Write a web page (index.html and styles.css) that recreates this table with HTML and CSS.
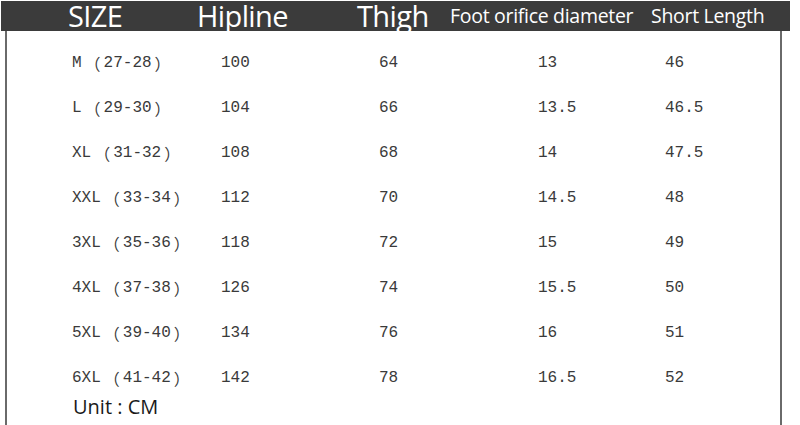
FILE: index.html
```html
<!DOCTYPE html>
<html>
<head>
<meta charset="utf-8">
<link rel="stylesheet" href="styles.css">
</head>
<body>
<div class="chart">
  <div class="head">
    <span class="h h-size">SIZE</span>
    <span class="h h-hip">Hipline</span>
    <span class="h h-thigh">Thigh</span>
    <span class="h h-small h-foot">Foot orifice diameter</span>
    <span class="h h-small h-short">Short Length</span>
  </div>
  <div class="body">
    <div class="row"><span class="c c1">M<span class="p">（</span>27-28<span class="p">）</span></span><span class="c c2">100</span><span class="c c3">64</span><span class="c c4">13</span><span class="c c5">46</span></div>
    <div class="row"><span class="c c1">L<span class="p">（</span>29-30<span class="p">）</span></span><span class="c c2">104</span><span class="c c3">66</span><span class="c c4">13.5</span><span class="c c5">46.5</span></div>
    <div class="row"><span class="c c1">XL<span class="p">（</span>31-32<span class="p">）</span></span><span class="c c2">108</span><span class="c c3">68</span><span class="c c4">14</span><span class="c c5">47.5</span></div>
    <div class="row"><span class="c c1">XXL<span class="p">（</span>33-34<span class="p">）</span></span><span class="c c2">112</span><span class="c c3">70</span><span class="c c4">14.5</span><span class="c c5">48</span></div>
    <div class="row"><span class="c c1">3XL<span class="p">（</span>35-36<span class="p">）</span></span><span class="c c2">118</span><span class="c c3">72</span><span class="c c4">15</span><span class="c c5">49</span></div>
    <div class="row"><span class="c c1">4XL<span class="p">（</span>37-38<span class="p">）</span></span><span class="c c2">126</span><span class="c c3">74</span><span class="c c4">15.5</span><span class="c c5">50</span></div>
    <div class="row"><span class="c c1">5XL<span class="p">（</span>39-40<span class="p">）</span></span><span class="c c2">134</span><span class="c c3">76</span><span class="c c4">16</span><span class="c c5">51</span></div>
    <div class="row"><span class="c c1">6XL<span class="p">（</span>41-42<span class="p">）</span></span><span class="c c2">142</span><span class="c c3">78</span><span class="c c4">16.5</span><span class="c c5">52</span></div>
    <div class="unit">Unit : CM</div>
  </div>
</div>
</body>
</html>
```
FILE: styles.css
```css
html, body {
  margin: 0;
  padding: 0;
  background: #ffffff;
}
.chart {
  width: 800px;
  height: 425px;
  padding-top: 1px;
  box-sizing: border-box;
}
.head {
  margin-left: 1px;
  width: 789px;
  height: 30px;
  background: #3b3b3b;
  display: flex;
  align-items: center;
  color: #ffffff;
  font-family: "Open Sans", "Noto Sans", sans-serif;
  white-space: nowrap;
  padding-left: 67px;
  box-sizing: border-box;
}
.h {
  font-size: 29px;
  line-height: 30px;
  letter-spacing: -0.6px;
}
.h-small {
  font-size: 19.5px;
  letter-spacing: -0.3px;
}
.h-size { width: 129px; }
.h-hip { width: 160px; }
.h-thigh { width: 93px; }
.h-foot { width: 201px; }
.h-short { width: 120px; }

.body {
  margin-left: 5px;
  width: 777px;
  height: 394px;
  border-left: 2px solid #6a6a6a;
  border-right: 2px solid #6a6a6a;
  box-sizing: border-box;
  padding-top: 22px;
}
.row {
  display: flex;
  height: 45px;
  align-items: flex-start;
  font-family: "Liberation Mono", "Noto Sans CJK SC", monospace;
  font-size: 16px;
  line-height: 20px;
  color: #3a3a3a;
  white-space: nowrap;
}
.p {
  display: inline-block;
  width: 22px;
  text-align: center;
  font-family: "Noto Sans CJK SC", sans-serif;
  font-size: 16px;
  line-height: 20px;
  vertical-align: top;
}
.c1 { width: 149px; padding-left: 65px; }
.c2 { width: 158px; }
.c3 { width: 159px; }
.c4 { width: 127px; }
.c5 { width: 80px; }
.unit {
  margin-top: -18px;
  padding-left: 66px;
  font-family: "Open Sans", "Noto Sans", sans-serif;
  font-size: 20px;
  line-height: 24px;
  color: #1a1a1a;
}
```
